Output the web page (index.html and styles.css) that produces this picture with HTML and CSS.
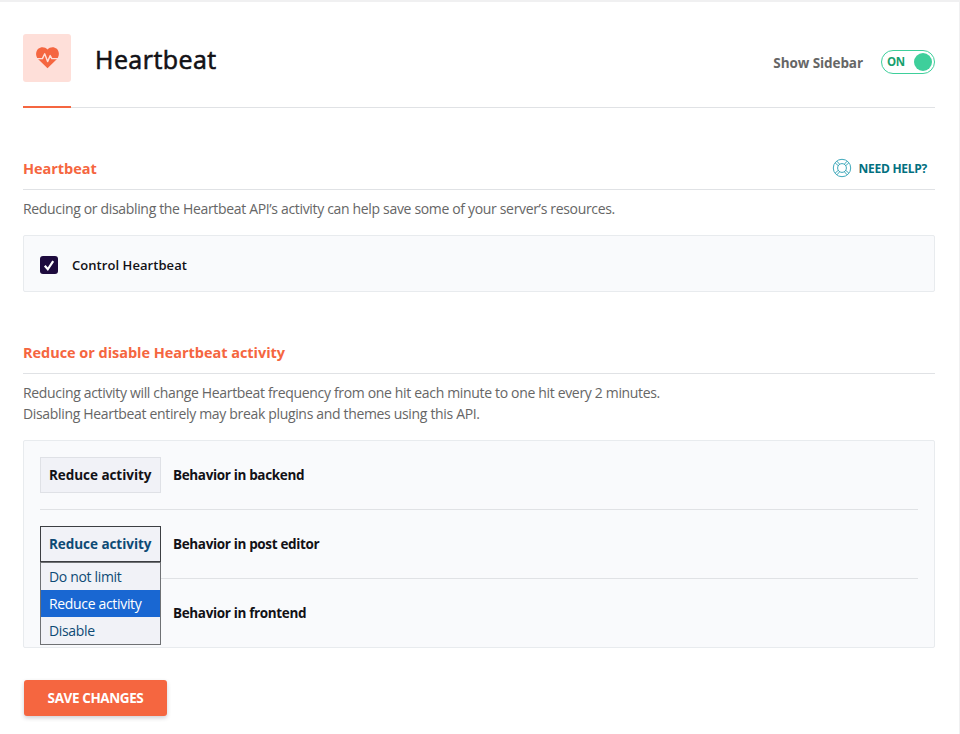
FILE: index.html
```html
<!DOCTYPE html>
<html lang="en">
<head>
  <meta charset="UTF-8" />
  <meta name="viewport" content="width=device-width, initial-scale=1.0" />
  <title>Heartbeat</title>
  <link rel="stylesheet" href="styles.css">
</head>
<body>
  <main class="page">
    <!-- Header -->
    <header class="header">
      <div class="header-icon">
        <svg width="48" height="48" viewBox="0 0 48 48">
          <path fill="#f56640" d="M24.5 34.2 L15 25 C12.2 21.8 12.7 17.2 15.2 14.8 C17.9 12.4 22 12.6 24.5 15.4 C27 12.6 31.1 12.4 33.8 14.8 C36.3 17.2 36.8 21.8 34 25 Z" />
          <path fill="none" stroke="#fedfd9" stroke-width="1.4" stroke-linejoin="round" d="M12 24.6 H19.4 L21.7 19.8 L24.6 27.6 L27.2 21.6 L28.8 24.6 H37" />
        </svg>
      </div>
      <h1>Heartbeat</h1>
      <div class="sidebar-toggle">
        <span class="toggle-label">Show Sidebar</span>
        <div class="switch"><span>ON</span><i></i></div>
      </div>
    </header>

    <!-- Heartbeat -->
    <section class="section">
      <div class="section-head">
        <h2>Heartbeat</h2>
        <a class="help" href="#">
          <svg width="20" height="20" viewBox="0 0 20 20" fill="none" stroke="#3fa9bb" stroke-width="1">
            <circle cx="10" cy="10" r="8.7" />
            <circle cx="10" cy="10" r="4.4" />
            <path d="M3.2 4.9 L6.2 7.6 M4.9 3.2 L7.6 6.2 M15.1 3.2 L12.4 6.2 M16.8 4.9 L13.8 7.6 M3.2 15.1 L6.2 12.4 M4.9 16.8 L7.6 13.8 M16.8 15.1 L13.8 12.4 M15.1 16.8 L12.4 13.8" />
          </svg>
          <span>NEED HELP?</span>
        </a>
      </div>
      <p class="desc">Reducing or disabling the Heartbeat API’s activity can help save some of your server’s resources.</p>
      <div class="box check-box">
        <span class="checkbox">
          <svg width="18" height="18" viewBox="0 0 18 18">
            <path fill="none" stroke="#fff" stroke-width="2.2" d="M4.8 9.8 L7.8 13.3 L13.2 5.2" />
          </svg>
        </span>
        <span class="check-label">Control Heartbeat</span>
      </div>
    </section>

    <!-- Activity -->
    <section class="section">
      <div class="section-head">
        <h2>Reduce or disable Heartbeat activity</h2>
      </div>
      <p class="desc">Reducing activity will change Heartbeat frequency from one hit each minute to one hit every 2 minutes.<br>Disabling Heartbeat entirely may break plugins and themes using this API.</p>
      <div class="box">
        <div class="row">
          <div class="select">Reduce activity</div>
          <span class="row-label">Behavior in backend</span>
        </div>
        <div class="row">
          <div class="select open">Reduce activity
            <ul class="options">
              <li>Do not limit</li>
              <li class="selected">Reduce activity</li>
              <li>Disable</li>
            </ul>
          </div>
          <span class="row-label">Behavior in post editor</span>
        </div>
        <div class="row">
          <div class="select"></div>
          <span class="row-label">Behavior in frontend</span>
        </div>
      </div>
    </section>

    <button class="save">SAVE CHANGES</button>
  </main>
</body>
</html>
```

FILE: styles.css
```css
:root {
  --orange: #f56640;
  --green: #3ecf9b;
  --line: #e0e2e5;
  --box: #f9fafc;
  --text: #121116;
  --muted: #666;
}

* {
  box-sizing: border-box;
}

body {
  margin: 0;
  background: #fff;
  font-family: "Open Sans", "Noto Sans", sans-serif;
  font-size: 13.5px;
  color: var(--text);
}

h1, h2, p, ul {
  margin: 0;
  padding: 0;
}

.page {
  height: 734px;
  overflow: hidden;
  border-top: 2px solid #f0f0f1;
  border-right: 1px solid #f0f0f1;
  padding: 32px 24px 0 23px;
}

.header {
  display: flex;
  height: 74px;
  background: linear-gradient(var(--orange), var(--orange)) 0 100% / 48px 2px no-repeat,
    linear-gradient(var(--line), var(--line)) 0 100% / 100% 1px no-repeat;
}

.header-icon {
  width: 48px;
  height: 48px;
  border-radius: 3px;
  background: #fedfd9;
}

.header-icon svg {
  display: block;
}

h1 {
  margin-left: 24px;
  font-size: 25px;
  font-weight: 400;
  letter-spacing: 0.45px;
  line-height: 51px;
  -webkit-text-stroke: 0.6px var(--text);
}

.sidebar-toggle {
  margin-left: auto;
  height: 56px;
  display: flex;
  align-items: center;
  gap: 18px;
}

.toggle-label {
  font-weight: 700;
  letter-spacing: -0.08px;
  color: var(--muted);
  padding-top: 2px;
}

.switch {
  width: 54px;
  height: 24px;
  border: 1px solid var(--green);
  border-radius: 12px;
  padding: 0 2px 0 5px;
  display: flex;
  align-items: center;
  justify-content: space-between;
  font-size: 11.5px;
  font-weight: 700;
  letter-spacing: -0.3px;
  line-height: 18px;
  color: #17a06e;
}

.switch i {
  width: 18px;
  height: 18px;
  border-radius: 50%;
  background: var(--green);
}

.section {
  padding-top: 40px;
}

.section-head {
  display: flex;
  justify-content: space-between;
  align-items: center;
  height: 42px;
  border-bottom: 1px solid var(--line);
}

h2 {
  font-size: 14.5px;
  font-weight: 700;
  letter-spacing: -0.04px;
  color: var(--orange);
}

.help {
  display: flex;
  align-items: center;
  gap: 7px;
  margin: -1px 8px 0 0;
  font-size: 12px;
  font-weight: 700;
  letter-spacing: -0.27px;
  color: #02707f;
  text-decoration: none;
}

.desc {
  margin-top: 8px;
  font-size: 14px;
  line-height: 21px;
  letter-spacing: -0.332px;
  color: var(--muted);
  white-space: nowrap;
}

.box {
  margin-top: 16px;
  border: 1px solid #e8ebee;
  border-radius: 2px;
  background: var(--box);
  padding: 0 16px;
}

.check-box {
  height: 57px;
  display: flex;
  align-items: center;
  gap: 14px;
}

.checkbox {
  width: 18px;
  height: 18px;
  margin-top: 2px;
  border-radius: 3px;
  background: #1d0a3d;
}

.checkbox svg {
  display: block;
}

.check-label {
  font-size: 13px;
  font-weight: 600;
  letter-spacing: 0.06px;
  padding-top: 2px;
}

.row {
  display: flex;
  align-items: center;
  gap: 12px;
  padding: 16px 0;
  border-bottom: 1px solid var(--line);
}

.row:last-child {
  border-bottom: 0;
}

.select {
  position: relative;
  width: 121px;
  height: 36px;
  padding-left: 8px;
  border: 1px solid #dfe1e6;
  background: #f1f2f7;
  font-weight: 700;
  letter-spacing: -0.05px;
  line-height: 34px;
  white-space: nowrap;
}

.select.open {
  border-color: #3c3e42;
  color: #0d4a75;
}

/* dropdown covers the rows below */
.options {
  position: absolute;
  z-index: 1;
  top: 35px;
  left: -1px;
  width: 121px;
  border: 1px solid #6f7174;
  background: #f1f2f7;
  list-style: none;
  font-size: 14px;
  font-weight: 400;
  letter-spacing: -0.33px;
  line-height: 27px;
}

.options li {
  padding-left: 8px;
}

.options .selected {
  background: #1967d2;
  color: #fff;
}

.row-label {
  font-weight: 700;
  letter-spacing: -0.35px;
}

.save {
  display: block;
  width: 143px;
  height: 36px;
  margin: 32px 0 0 1px;
  padding: 0;
  border: 0;
  border-radius: 3px;
  background: var(--orange);
  box-shadow: 0 2px 4px rgba(40, 40, 70, 0.22);
  color: #fff;
  font-family: inherit;
  font-size: 13.5px;
  font-weight: 700;
  letter-spacing: -0.4px;
}
```
